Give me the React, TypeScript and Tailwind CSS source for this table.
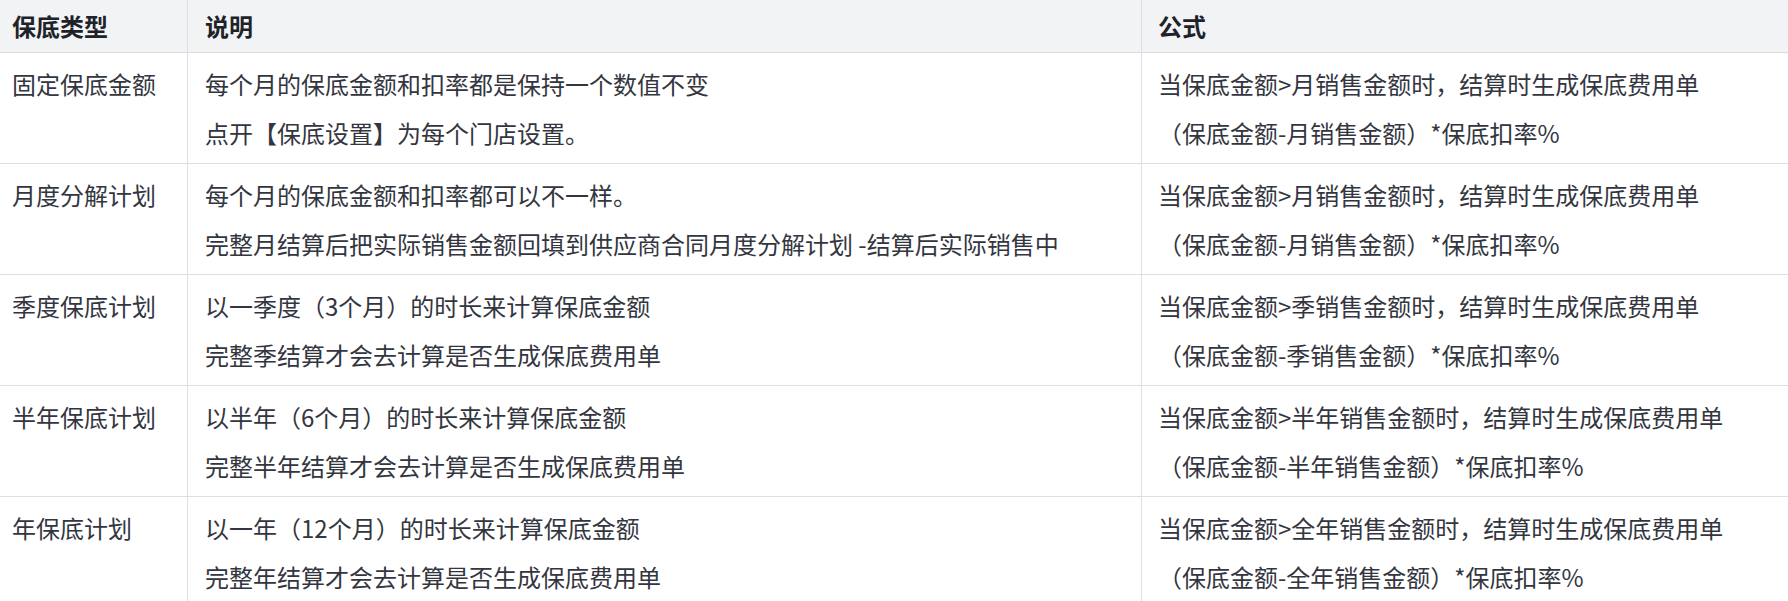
import React from 'react';

const rows = [
  {
    type: '固定保底金额',
    desc: ['每个月的保底金额和扣率都是保持一个数值不变', '点开【保底设置】为每个门店设置。'],
    formula: ['当保底金额>月销售金额时，结算时生成保底费用单', '（保底金额-月销售金额）*保底扣率%'],
  },
  {
    type: '月度分解计划',
    desc: ['每个月的保底金额和扣率都可以不一样。', '完整月结算后把实际销售金额回填到供应商合同月度分解计划 -结算后实际销售中'],
    formula: ['当保底金额>月销售金额时，结算时生成保底费用单', '（保底金额-月销售金额）*保底扣率%'],
  },
  {
    type: '季度保底计划',
    desc: ['以一季度（3个月）的时长来计算保底金额', '完整季结算才会去计算是否生成保底费用单'],
    formula: ['当保底金额>季销售金额时，结算时生成保底费用单', '（保底金额-季销售金额）*保底扣率%'],
  },
  {
    type: '半年保底计划',
    desc: ['以半年（6个月）的时长来计算保底金额', '完整半年结算才会去计算是否生成保底费用单'],
    formula: ['当保底金额>半年销售金额时，结算时生成保底费用单', '（保底金额-半年销售金额）*保底扣率%'],
  },
  {
    type: '年保底计划',
    desc: ['以一年（12个月）的时长来计算保底金额', '完整年结算才会去计算是否生成保底费用单'],
    formula: ['当保底金额>全年销售金额时，结算时生成保底费用单', '（保底金额-全年销售金额）*保底扣率%'],
  },
];

function Lines({ items }: { items: string[] }) {
  return (
    <div className="flex flex-col gap-[13px]">
      {items.map((t, i) => (
        <div key={i} className="leading-[36px] whitespace-nowrap">
          {t}
        </div>
      ))}
    </div>
  );
}

export default function App() {
  return (
    <div
      className="w-[1788px] h-[601px] overflow-hidden bg-white text-[24px] text-[#333640]"
      style={{ fontFamily: '"Noto Sans CJK SC", "Noto Sans", sans-serif' }}
    >
      <div className="grid grid-cols-[188px_954px_1fr] h-[53px] bg-[#f2f3f5] border-b border-[#d8dbe2] font-bold text-[#1f2329]">
        <div className="border-r border-[#dcdfe6] pl-[12px] flex items-center">保底类型</div>
        <div className="border-r border-[#dcdfe6] pl-[17px] flex items-center">说明</div>
        <div className="pl-[16px] flex items-center">公式</div>
      </div>
      {rows.map((r) => (
        <div key={r.type} className="grid grid-cols-[188px_954px_1fr] h-[111px] border-b border-[#dcdfe6]">
          <div className="border-r border-[#dcdfe6] pl-[12px] pt-[13px] leading-[36px]">{r.type}</div>
          <div className="border-r border-[#dcdfe6] pl-[17px] pt-[13px]">
            <Lines items={r.desc} />
          </div>
          <div className="pl-[16px] pt-[13px]">
            <Lines items={r.formula} />
          </div>
        </div>
      ))}
    </div>
  );
}
